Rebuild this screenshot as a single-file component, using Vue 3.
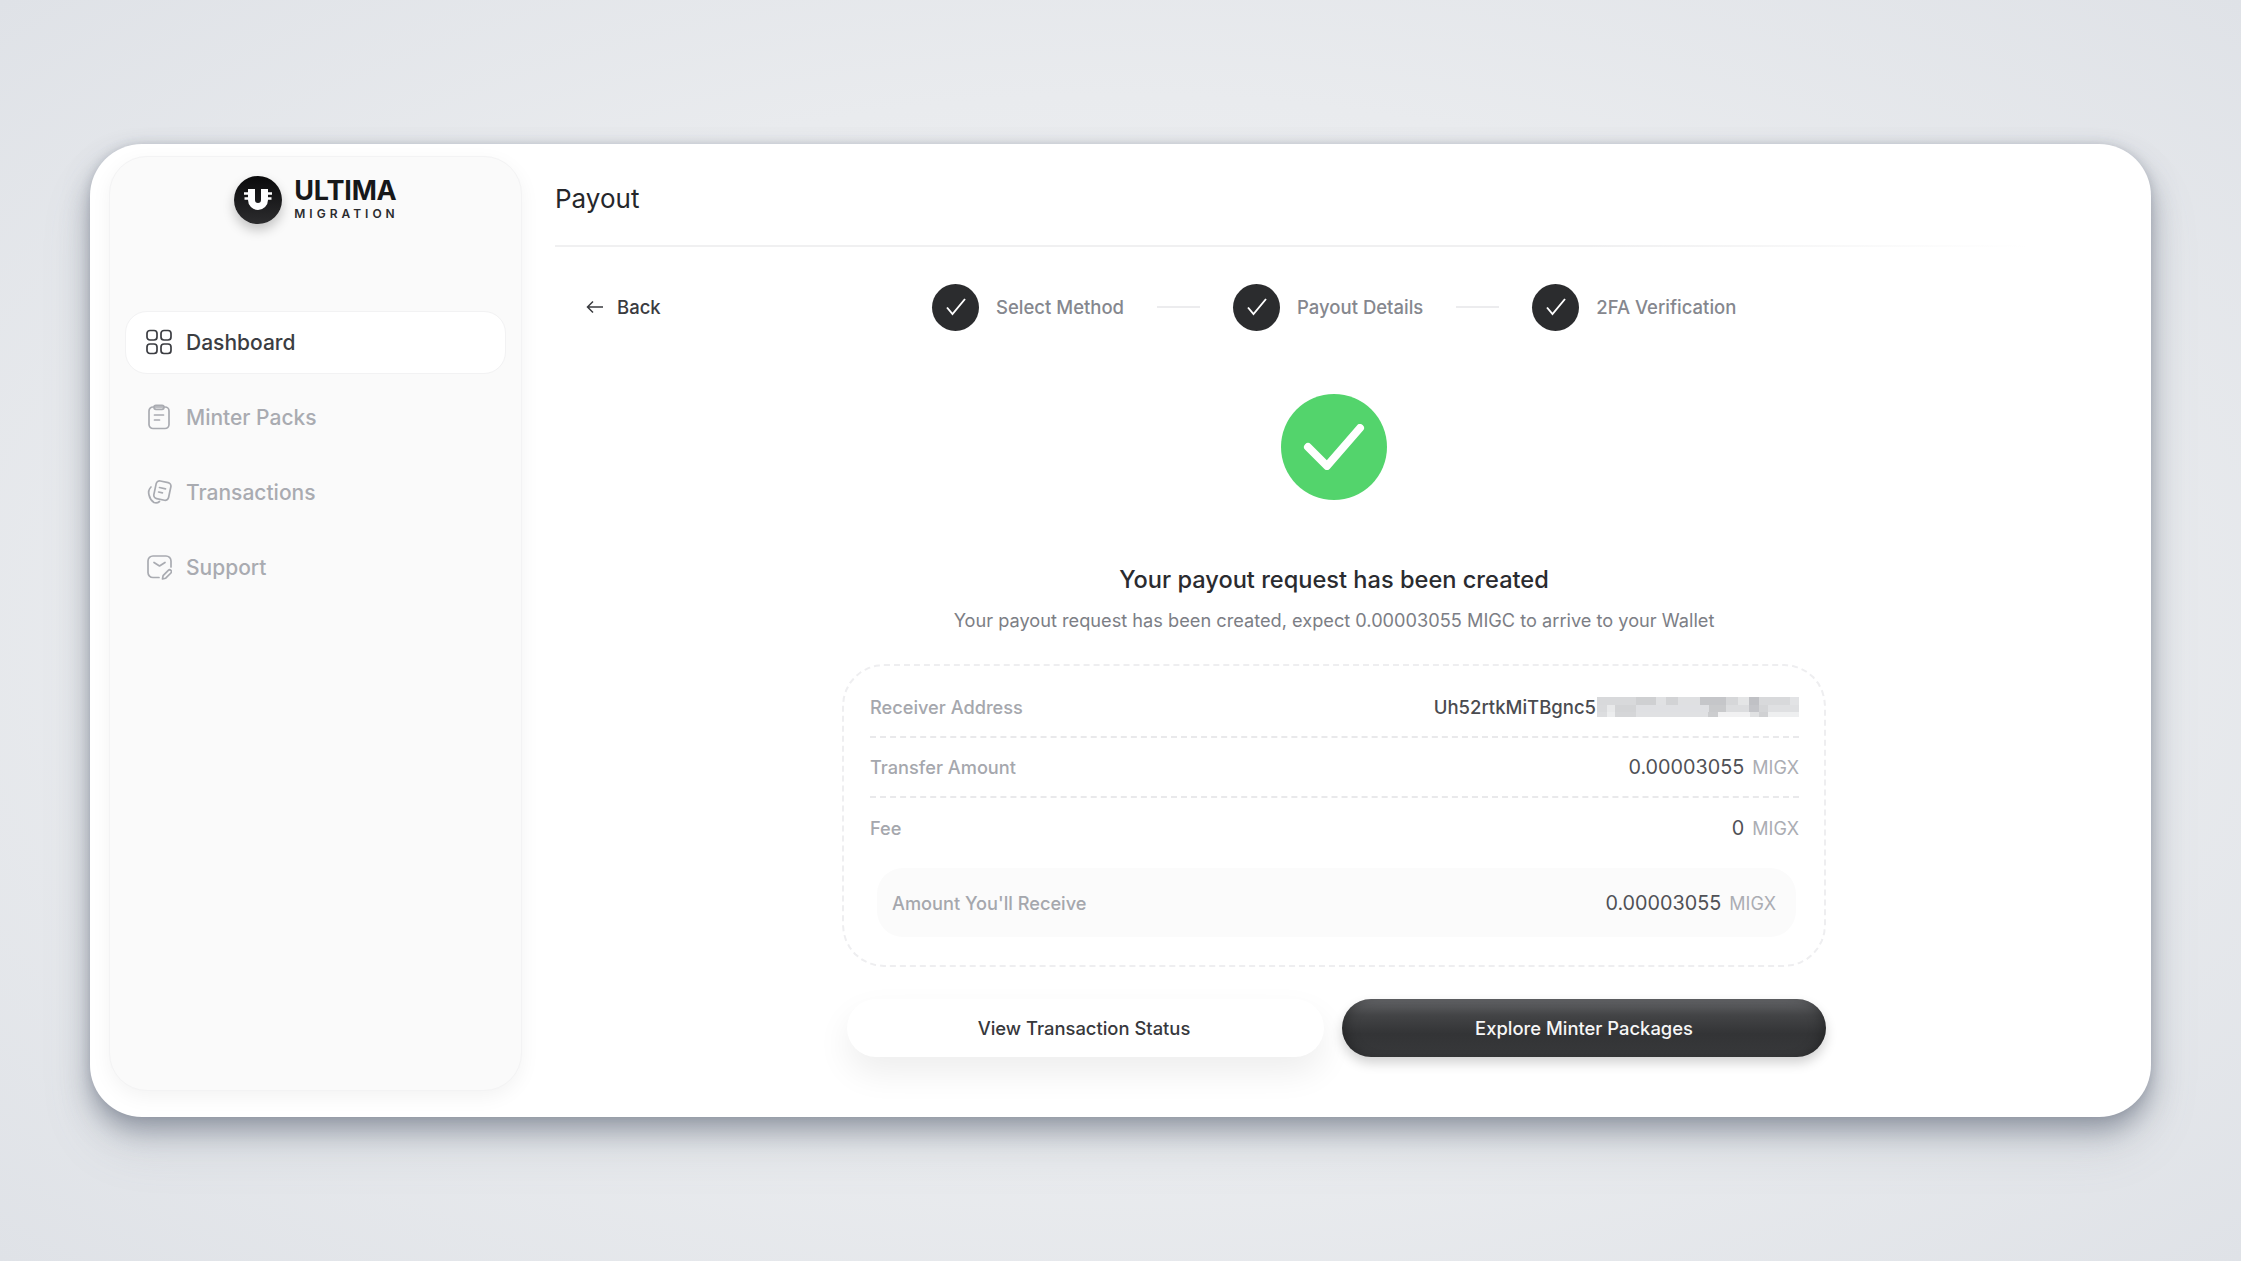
<script setup>
const navItems = [
  { label: 'Dashboard', icon: 'grid', active: true },
  { label: 'Minter Packs', icon: 'clipboard' },
  { label: 'Transactions', icon: 'cards' },
  { label: 'Support', icon: 'mail' }
]

const steps = ['Select Method', 'Payout Details', '2FA Verification']

// blurred out part of the address, three rows of [width, colour]
const mosaic = [
  {
    height: 8,
    tiles: [[39, '#d8d9db'], [20, '#cfd0d2'], [10, '#e0e1e3'], [12, '#d2d3d5'], [22, '#dfe0e2'], [26, '#c5c6c9'], [12, '#d6d7d9'], [11, '#e4e5e6'], [10, '#c0c1c5'], [31, '#d8d9db'], [9, '#e2e3e5']]
  },
  {
    height: 7,
    tiles: [[10, '#d9dadc'], [8, '#e8e9ea'], [21, '#d3d4d6'], [73, '#dfe0e3'], [17, '#c9cacc'], [23, '#dcdddf'], [10, '#c4c5c9'], [9, '#d4d5d7'], [31, '#dfe0e2']]
  },
  {
    height: 5,
    tiles: [[10, '#dcdddf'], [8, '#ecedee'], [21, '#d5d6d8'], [72, '#e0e1e3'], [10, '#cccdcf'], [32, '#f1f1f2'], [9, '#e0e1e2'], [9, '#d0d1d3'], [31, '#eeeff0']]
  }
]
</script>

<template>
  <div class="page">
    <div class="window">
      <aside class="sidebar">
        <div class="logo">
          <div class="logo-mark">
            <svg width="32" height="32" viewBox="0 0 32 32" fill="none">
              <path d="M9.5 5v11a6.5 6.5 0 0 0 13 0V5" stroke="#fff" stroke-width="7" />
              <path d="M2 9.5h5M2.5 14.5h5M25 9.5h5M24.500 14.5h5" stroke="#fff" stroke-width="2.4" />
            </svg>
          </div>
          <div class="logo-text">
            <div class="logo-name">ULTIMA</div>
            <div class="logo-sub">MIGRATION</div>
          </div>
        </div>

        <nav class="nav">
          <div v-for="item in navItems" :key="item.label" class="nav-item" :class="{ active: item.active }">
            <svg class="nav-icon" width="26" height="26" viewBox="0 0 26 26" fill="none" stroke="currentColor" stroke-width="1.7" stroke-linecap="round" stroke-linejoin="round">
              <template v-if="item.icon === 'grid'">
                <rect x="1" y="1.500" width="10" height="9.500" rx="3" />
                <rect x="15" y="1.500" width="10" height="9.500" rx="3" />
                <rect x="1" y="15" width="10" height="9.500" rx="3" />
                <rect x="15" y="15" width="10" height="9.500" rx="3" />
              </template>
              <template v-else-if="item.icon === 'clipboard'">
                <rect x="3" y="3" width="20" height="21.500" rx="4" />
                <rect x="8" y="1.300" width="10" height="4" rx="2" />
                <path d="M8.500 11h9M8.500 16h5" />
              </template>
              <template v-else-if="item.icon === 'cards'">
                <rect x="9" y="2.500" width="15" height="18" rx="3.500" transform="rotate(12 16 11)" />
                <path d="M13.500 8.500l6 1.300M12.600 13l3.800.8" />
                <path d="M5 8c-2 2-2.800 5-2 8 .8 3.500 2.700 6 5 7.500 2 .8 4 .3 5.500-1" />
              </template>
              <template v-else>
                <path d="M13 23.500H7a5 5 0 0 1-5-5V7a5 5 0 0 1 5-5h13a5 5 0 0 1 5 5v6" />
                <path d="M8 8.500l5.500 3.500L19 8.500" />
                <path d="M16.500 25l.6-3.400 5.200-5.200a1.800 1.800 0 0 1 2.600 2.600l-5.200 5.200z" />
              </template>
            </svg>
            <span>{{ item.label }}</span>
          </div>
        </nav>
      </aside>

      <main class="content">
        <h1 class="title">Payout</h1>

        <div class="stepbar">
          <div class="back">
            <svg width="18" height="14" viewBox="0 0 18 14" fill="none" stroke="#3a3b3f" stroke-width="1.500">
              <path d="M17 7H1.500M7 1.500L1.500 7 7 12.500" />
            </svg>
            <span>Back</span>
          </div>
          <div class="steps">
            <template v-for="(step, i) in steps" :key="step">
              <div v-if="i > 0" class="step-line"></div>
              <div class="step">
                <div class="step-dot">
                  <svg width="24" height="24" viewBox="0 0 24 24" fill="none" stroke="#fff" stroke-width="1.900">
                    <path d="M3 12.500l5.500 6.500L21 4" />
                  </svg>
                </div>
                <span>{{ step }}</span>
              </div>
            </template>
          </div>
        </div>

        <div class="result">
          <div class="success">
            <svg width="62" height="46" viewBox="0 0 62 46" fill="none" stroke="#fff" stroke-width="8" stroke-linecap="round" stroke-linejoin="round">
              <path d="M5 23l19 19L57 4" />
            </svg>
          </div>
          <h2 class="result-title">Your payout request has been created</h2>
          <p class="result-sub">Your payout request has been created, expect 0.00003055 MIGC to arrive to your Wallet</p>

          <div class="details">
            <div class="row line">
              <span class="label">Receiver Address</span>
              <span class="address">
                Uh52rtkMiTBgnc5
                <span class="mosaic">
                  <span v-for="(row, r) in mosaic" :key="r" class="mosaic-row" :style="{ height: row.height + 'px' }">
                    <i v-for="(tile, i) in row.tiles" :key="i" :style="{ width: tile[0] + 'px', background: tile[1] }"></i>
                  </span>
                </span>
              </span>
            </div>
            <div class="row line">
              <span class="label">Transfer Amount</span>
              <span class="value">0.00003055<em>MIGX</em></span>
            </div>
            <div class="row">
              <span class="label">Fee</span>
              <span class="value">0<em>MIGX</em></span>
            </div>
            <div class="row total">
              <span class="label">Amount You'll Receive</span>
              <span class="value">0.00003055<em>MIGX</em></span>
            </div>
          </div>

          <div class="actions">
            <button class="btn btn-light">View Transaction Status</button>
            <button class="btn btn-dark">Explore Minter Packages</button>
          </div>
        </div>
      </main>
    </div>
  </div>
</template>

<style>
html,
body {
  margin: 0;
  background: #e2e5e9;
}
</style>

<style scoped>
.page {
  box-sizing: border-box;
  width: 2241px;
  height: 1261px;
  padding: 144px 90px 144px;
  background: radial-gradient(ellipse at 50% 50%, #f0f1f3 20%, #e9ebee 60%, #dfe2e7 100%);
  font-family: Inter, "Liberation Sans", sans-serif;
  overflow: hidden;
}

.window {
  display: flex;
  height: 973px;
  box-sizing: border-box;
  padding: 12px 0 26px 19px;
  background: #fff;
  border-radius: 52px;
  box-shadow: 0 14px 26px rgba(90, 98, 115, 0.5), 0 30px 50px rgba(110, 118, 135, 0.15), 0 0 10px rgba(110, 118, 135, 0.25);
}

.sidebar {
  width: 413px;
  flex-shrink: 0;
  box-sizing: border-box;
  padding: 19px 15px 0;
  background: #fafafa;
  border: 1px solid #f3f3f4;
  border-radius: 38px;
  box-shadow: 0 6px 20px rgba(0, 0, 0, 0.05);
}

.logo {
  display: flex;
  align-items: center;
  justify-content: center;
  gap: 12px;
  margin-left: 2px;
}

.logo-mark {
  display: flex;
  align-items: center;
  justify-content: center;
  width: 48px;
  height: 48px;
  border-radius: 50%;
  background: linear-gradient(180deg, #0a0a0b, #2c2c2e);
  box-shadow: 0 6px 12px rgba(0, 0, 0, 0.22);
}

.logo-text {
  margin-bottom: 3px;
}

.logo-name {
  margin-bottom: 2.500px;
  font-size: 27px;
  line-height: 28px;
  font-weight: 700;
  letter-spacing: -0.2px;
  color: #17181a;
}

.logo-sub {
  font-size: 12px;
  line-height: 13px;
  font-weight: 600;
  letter-spacing: 4px;
  color: #2a2b2e;
}

.nav {
  display: flex;
  flex-direction: column;
  gap: 12px;
  margin-top: 86.500px;
}

.nav-item {
  box-sizing: border-box;
  display: flex;
  align-items: center;
  gap: 14px;
  height: 63px;
  padding: 0 20px;
  font-size: 21px;
  font-weight: 500;
  color: #a9abb1;
  border-radius: 22px;
  border: 1px solid transparent;
}

.nav-item.active {
  color: #3b3d42;
  background: #fff;
  border-color: #f2f2f3;
}

.nav-icon {
  flex-shrink: 0;
}

.content {
  flex: 1;
  min-width: 0;
  padding: 0 121px 0 33px;
}

.title {
  margin: 0;
  padding: 26px 0 30px;
  font-size: 26px;
  line-height: 33px;
  font-weight: 400;
  color: #26272b;
  border-bottom: 2px solid;
  border-image: linear-gradient(90deg, #f0f0f1 70%, rgba(240, 240, 241, 0)) 1;
}

.stepbar {
  display: flex;
  align-items: center;
  padding: 36.500px 0 0 31px;
}

.back {
  display: flex;
  align-items: center;
  gap: 13px;
  width: 346px;
  font-size: 18.500px;
  font-weight: 500;
  color: #3a3b3f;
}

.steps {
  display: flex;
  align-items: center;
}

.step {
  display: flex;
  align-items: center;
  gap: 17px;
  font-size: 18.500px;
  font-weight: 500;
  color: #85878e;
}

.step-dot {
  display: flex;
  align-items: center;
  justify-content: center;
  width: 47px;
  height: 47px;
  border-radius: 50%;
  background: #2b2c2e;
}

.step-line {
  width: 43px;
  height: 2px;
  margin: 0 33px 0 33px;
  background: #ececee;
}

.result {
  display: flex;
  flex-direction: column;
  align-items: center;
  width: 984px;
  margin: 63.500px 0 0 287px;
}

.success {
  display: flex;
  align-items: center;
  justify-content: center;
  width: 106px;
  height: 106px;
  border-radius: 50%;
  background: #53d46c;
}

.result-title {
  margin: 65px 0 0;
  font-size: 23.600px;
  line-height: 30px;
  font-weight: 500;
  color: #2a2b2f;
}

.result-sub {
  margin: 13px 0 0;
  font-size: 18.200px;
  line-height: 24px;
  color: #7c7e85;
}

.details {
  box-sizing: border-box;
  width: 984px;
  height: 303px;
  margin-top: 32px;
  padding: 12px 25px 0 26px;
  border: 2px dashed #eeeef0;
  border-radius: 42px;
}

.row {
  box-sizing: border-box;
  display: flex;
  align-items: center;
  justify-content: space-between;
  height: 60px;
}

.row.line {
  border-bottom: 2px dashed #e9e9eb;
}

.label {
  color: #a5a7ad;
  font-size: 18.200px;
  font-weight: 500;
}

.address {
  display: flex;
  align-items: center;
  color: #4a4b50;
  font-size: 18.500px;
  font-weight: 500;
}

.mosaic {
  display: flex;
  flex-direction: column;
  width: 202px;
  margin-left: 1px;
}

.mosaic-row {
  display: flex;
}

.mosaic i {
  display: block;
  height: 100%;
}

.value {
  color: #505156;
  font-size: 19.800px;
  font-weight: 400;
}

.value em {
  margin-left: 8px;
  font-size: 18px;
  font-style: normal;
  color: #abadb3;
}

.row.total {
  height: 69px;
  margin: 10px 3px 0 7px;
  padding: 0 20px 0 15px;
  background: #fbfbfb;
  border-radius: 26px;
}

.actions {
  display: flex;
  gap: 18px;
  width: 984px;
  margin-top: 32px;
  padding-left: 5px;
  box-sizing: border-box;
}

.btn {
  height: 58px;
  border: none;
  border-radius: 29px;
  font-family: inherit;
  font-size: 18.400px;
  font-weight: 500;
}

.btn-light {
  width: 477px;
  padding-right: 9px;
  color: #37383c;
  background: #fff;
  box-shadow: 0 16px 34px rgba(0, 0, 0, 0.07);
}

.btn-dark {
  width: 484px;
  color: #f6f6f6;
  background: linear-gradient(180deg, #646568 0%, #434446 28%, #333436 60%, #37383a 100%);
  box-shadow: inset 10px 0 14px -8px rgba(0, 0, 0, 0.35), inset -10px 0 14px -8px rgba(0, 0, 0, 0.35), 0 6px 12px rgba(0, 0, 0, 0.18);
}
</style>
